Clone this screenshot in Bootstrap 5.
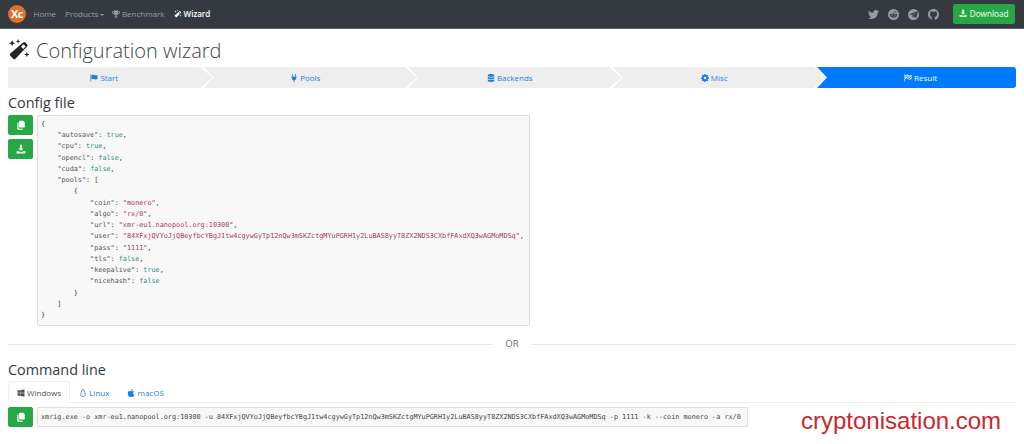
<!DOCTYPE html>
<html lang="en">
<head>
<meta charset="utf-8">
<title>Configuration wizard</title>
<link href="https://cdn.jsdelivr.net/npm/bootstrap@5.3.0/dist/css/bootstrap.min.css" rel="stylesheet">
<style>
html,body{height:444px;overflow:hidden}
body{font-family:"Open Sans","Noto Sans",sans-serif;font-size:8px;line-height:1.4;color:#212529;background:#fff;position:relative}
svg.ic{width:1em;height:1em;fill:currentColor;vertical-align:-.125em}
.topbar{height:29px;background:#343a40;padding:0 9px 0 8px;border-bottom:1px solid #5f6368}
.brandmark{width:18px;height:18px;border-radius:50%;background:#e0702a;color:#fff;font:700 11px/18px "Open Sans",sans-serif;text-align:center;letter-spacing:-.5px;margin-right:3px}
.topbar .nav-link{font-size:8px;padding:0 4.5px;color:rgba(255,255,255,.5)}
.topbar .nav-link.active{color:#fff;font-weight:600}
.topbar .dropdown-toggle{padding-right:3px}
.topbar .dropdown-toggle::after{margin-left:2px;vertical-align:.15em;border-width:.25em .25em 0}
.social{color:rgba(255,255,255,.5);font-size:11px;gap:9px;margin-right:14px}
.btn-dl{font-size:8.2px;height:20px;width:62px;padding:0;border-radius:2px;line-height:18px;background:#28a745;border-color:#28a745;color:#fff;margin-top:-1px}
.pagewrap{padding:0 8px}
.wiz-title{font-size:20px;font-weight:300;line-height:30px;margin:7px 0 0;color:#3f464c;display:flex;align-items:center;gap:6px;height:30px}
.wiz-title svg{width:22px;height:22px;fill:#212529;margin-top:-3px}
.stepper{display:flex;height:21px;margin-top:1px}
.stepitem{flex:0 0 213.5px;margin-right:-9px;background:#eee;color:#1c7fe8;text-align:center;line-height:22px;padding-right:10px;clip-path:polygon(0 0,calc(100% - 12px) 0,100% 50%,calc(100% - 12px) 100%,0 100%,10px 50%)}
.stepitem:first-child{flex-basis:204.5px;border-radius:2px 0 0 2px;padding-right:12px;clip-path:polygon(0 0,calc(100% - 12px) 0,100% 50%,calc(100% - 12px) 100%,0 100%)}
.stepitem:last-child{flex:1 1 0;margin-right:0;background:#007bff;color:#fff;border-radius:0 3px 3px 0;padding-right:0;padding-left:8px;clip-path:polygon(0 0,100% 0,100% 100%,0 100%,10px 50%)}
.sect-h{font-size:14.4px;font-weight:400;line-height:18px;margin:6px 0 3px;color:#343a40}
.act-btn{width:25px;height:20px;padding:0;background:#28a745;border-color:#28a745;color:#fff;border-radius:2px;font-size:10px;line-height:18px;display:flex;align-items:center;justify-content:center}
.codebox{font-family:"DejaVu Sans Mono","Liberation Mono",monospace;font-size:6.81px;line-height:11.24px;background:#f8f8f8;border:1px solid #ddd;color:#444;margin:0;padding:3px;overflow:hidden;border-radius:1px}
.cfgpre{width:493px;height:211px}
.k{color:#555}.b{color:#2f8f83}.s{color:#a63a5c}
.orline{display:flex;align-items:center;gap:12px;color:#6c757d;font-size:9.6px;height:16px;margin-top:10px}
.orline::before,.orline::after{content:"";flex:1;border-top:1px solid #e9e9e9}
.cmd-h{margin:9px 0 2px}
.ostabs{border-bottom:1px solid #eee;height:22px;margin-bottom:4px}
.ostabs .nav-link{font-size:8px;padding:0 8px;height:22px;line-height:22px;color:#1c7fe8;border-radius:2px 2px 0 0;border:1px solid transparent}
.ostabs .nav-link.active{color:#495057;border-color:#eee #eee #fff;background:#fff}
.cmdbox{width:711px;height:20px;line-height:18px;padding:0 3px;white-space:pre}
.watermark{position:absolute;left:801px;top:408px;color:#c9282d;font:24px/26px "Liberation Sans",Arial,sans-serif}
</style>
</head>
<body>
<svg width="0" height="0" class="position-absolute">
<defs>
<symbol id="i-copy" viewBox="0 0 16 16"><path d="M6 1h5.500L14 3.500V11a1 1 0 0 1-1 1H6a1 1 0 0 1-1-1V2a1 1 0 0 1 1-1zM3 4h1v8a2 2 0 0 0 2 2h5v.5a1 1 0 0 1-1 1H3.500a1.500 1.500 0 0 1-1.500-1.500V5a1 1 0 0 1 1-1z"/></symbol>
<symbol id="i-dl" viewBox="0 0 16 16"><path d="M6.500 1h3v6H12L8 11 4 7h2.500zM1 11.500h3.800L6.500 13h3l1.700-1.500H15V15H1zm11.500 1.300a.6.6 0 1 0 0 1.200.6.6 0 0 0 0-1.200z"/></symbol>
<symbol id="i-flag" viewBox="0 0 16 16"><path d="M1 1h1.300v14H1zM3 2.200c2.500-1.300 4.500-.8 6 0s3.500.8 6 0v8c-2.500 1.300-4.500 1-6 .2s-3.500-.9-6 0z"/></symbol>
<symbol id="i-plug" viewBox="0 0 16 16"><path d="M4.500 0H6v4.500H4.500zM10 0h1.500v4.500H10zM2.500 5h11v1.500h-1V8a4.500 4.500 0 0 1-3.500 4.400V16H7v-3.600A4.500 4.500 0 0 1 3.500 8V6.500h-1z"/></symbol>
<symbol id="i-db" viewBox="0 0 16 16"><path d="M8 0c3.600 0 6.500 1 6.500 2.300v1.400C14.500 5 11.600 6 8 6S1.500 5 1.500 3.700V2.300C1.500 1 4.400 0 8 0zM1.500 5.300C3 6.400 5.300 7 8 7s5-.6 6.500-1.700v3.400C14.500 10 11.600 11 8 11s-6.500-1-6.500-2.300zm0 5C3 11.400 5.300 12 8 12s5-.6 6.500-1.700v3.400C14.500 15 11.600 16 8 16s-6.500-1-6.500-2.300z"/></symbol>
<symbol id="i-cog" viewBox="0 0 16 16"><path fill-rule="evenodd" d="M6.700 0h2.600l.4 2.100 1.300.6 1.800-1.200 1.800 1.800-1.200 1.800.6 1.300 2 .4v2.600l-2 .4-.6 1.300 1.200 1.800-1.800 1.800-1.800-1.200-1.300.6-.4 2.100H6.700l-.4-2.100-1.300-.6-1.800 1.200-1.800-1.800 1.200-1.800-.6-1.300-2-.4V6.800l2-.4.6-1.300-1.200-1.800 1.800-1.800L5 2.700l1.300-.6zM8 5.500a2.500 2.500 0 1 0 0 5 2.500 2.500 0 0 0 0-5z"/></symbol>
<symbol id="i-check" viewBox="0 0 16 16"><path fill-rule="evenodd" d="M1 1h1.300v14H1zM3 2.200c2.500-1.300 4.500-.8 6 0s3.500.8 6 0v8c-2.500 1.300-4.500 1-6 .2s-3.500-.9-6 0zM4 3v2.500h2.500V3zm2.500 2.500V8H9V5.500zM9 3v2.500h2.500V3zm2.500 2.500V8H14V5.500zM4 8v2h2.500V8zm5 0v2h2.500V8z"/></symbol>
<symbol id="i-trophy" viewBox="0 0 16 16"><path fill-rule="evenodd" d="M4 1h8v1.500h3.500V5c0 2.200-1.800 3.800-4.400 4.200-.6.800-1.300 1.300-2.100 1.500V13h2v2H5v-2h2v-2.300c-.8-.2-1.500-.7-2.100-1.500C2.300 8.800.5 7.200.5 5V2.500H4zM2 4v1c0 1 .8 2 2.400 2.500-.3-1-.4-2.200-.4-3.500zm12 0h-2c0 1.300-.1 2.500-.4 3.500C13.200 7 14 6 14 5z"/></symbol>
<symbol id="i-magic" viewBox="0 0 24 24"><path d="M16.500 3.800a1.700 1.700 0 0 1 2.400 0l1.900 1.900a1.700 1.700 0 0 1 0 2.400L8.200 21.500a1.700 1.700 0 0 1-2.400 0l-3.300-3.300a1.700 1.700 0 0 1 0-2.400zM14.200 8.500l2.300 2.300 2.700-2.700-2.300-2.300zM4.500 1l1 2.500L8 4.500 5.500 5.500l-1 2.500-1-2.500L1 4.500l2.500-1zM11 0l.7 1.800 1.800.7-1.800.7L11 5l-.7-1.800-1.800-.7 1.800-.7zM20.500 14l.8 2.200 2.200.8-2.200.8-.8 2.200-.8-2.200-2.200-.8 2.200-.8z"/></symbol>
<symbol id="i-tw" viewBox="0 0 512 512"><path d="M459.37 151.716c.325 4.548.325 9.097.325 13.645 0 138.72-105.583 298.558-298.558 298.558-59.452 0-114.68-17.219-161.137-47.106 8.447.974 16.568 1.299 25.34 1.299 49.055 0 94.213-16.568 130.274-44.832-46.132-.975-84.792-31.188-98.112-72.772 6.498.974 12.995 1.624 19.818 1.624 9.421 0 18.843-1.3 27.614-3.573-48.081-9.747-84.143-51.98-84.143-102.985v-1.299c13.969 7.797 30.214 12.67 47.431 13.319-28.264-18.843-46.781-51.005-46.781-87.391 0-19.492 5.197-37.36 14.294-52.954 51.655 63.675 129.3 105.258 216.365 109.807-1.624-7.797-2.599-15.918-2.599-24.04 0-57.828 46.782-104.934 104.934-104.934 30.213 0 57.502 12.67 76.67 33.137 23.715-4.548 46.456-13.32 66.599-25.34-7.798 24.366-24.366 44.833-46.132 57.827 21.117-2.273 41.584-8.122 60.426-16.243-14.292 20.791-32.161 39.308-52.628 54.253z"/></symbol>
<symbol id="i-rd" viewBox="0 0 16 16"><path fill-rule="evenodd" d="M8 0a8 8 0 1 1 0 16A8 8 0 0 1 8 0zM3.500 7a1.100 1.100 0 0 0-.5 2c0 2 2.200 3.500 5 3.500s5-1.500 5-3.500a1.100 1.100 0 1 0-1.500-1.500C10.700 7 9.500 6.600 8.300 6.500L9 4.300l1.700.4a.9.900 0 1 0 .1-.7L8.700 3.500 7.700 6.500c-1.200.1-2.400.5-3.200 1A1.100 1.100 0 0 0 3.500 7zM6 7.800a1 1 0 1 1 0 2 1 1 0 0 1 0-2zm4 0a1 1 0 1 1 0 2 1 1 0 0 1 0-2zM5.800 10.500c1.400 1 3 1 4.400 0l.2.300c-1.400 1.200-3.400 1.200-4.800 0z"/></symbol>
<symbol id="i-tg" viewBox="0 0 16 16"><path fill-rule="evenodd" d="M8 0a8 8 0 1 1 0 16A8 8 0 0 1 8 0zM3 7.800l2.700 1 1 3.200c.1.300.4.300.6.100l1.500-1.200 2.700 2c.3.200.6 0 .7-.3l1.800-8.600c.1-.4-.3-.7-.6-.6L3 7.200c-.4.100-.4.500 0 .6zm3.500.9l5-3.100c.1-.1.200 0 .1.100L7.500 9.500l-.3 1.700z"/></symbol>
<symbol id="i-gh" viewBox="0 0 16 16"><path d="M8 0C3.580 0 0 3.580 0 8c0 3.540 2.290 6.530 5.470 7.590.4.070.550-.170.550-.380 0-.190-.010-.820-.010-1.490-2.010.370-2.530-.490-2.690-.940-.090-.230-.480-.940-.820-1.130-.280-.150-.680-.520-.010-.530.630-.010 1.080.580 1.230.820.720 1.210 1.870.870 2.330.660.070-.520.280-.870.510-1.070-1.780-.200-3.640-.890-3.640-3.950 0-.870.310-1.590.820-2.150-.080-.200-.360-1.020.080-2.120 0 0 .670-.210 2.200.820.640-.180 1.320-.270 2-.270.680 0 1.360.090 2 .270 1.530-1.040 2.200-.820 2.200-.820.440 1.100.160 1.920.080 2.120.510.560.820 1.270.820 2.150 0 3.070-1.870 3.750-3.650 3.950.290.250.540.730.540 1.480 0 1.070-.010 1.930-.010 2.200 0 .210.150.460.550.380A8.013 8.013 0 0016 8c0-4.420-3.580-8-8-8z"/></symbol>
<symbol id="i-win" viewBox="0 0 448 512"><path d="M0 93.7l183.6-25.3v177.4H0V93.7zm0 324.6l183.6 25.3V268.4H0v149.900zm203.800 28L448 480V268.400H203.800v177.900zm0-380.600v180.100H448V32L203.800 65.700z"/></symbol>
<symbol id="i-linux" viewBox="0 0 16 16"><path fill="none" stroke="currentColor" stroke-width="1.500" d="M8 1c-1.700 0-2.300 1.300-2.300 3 0 1.800-2.700 4-2.700 7 0 2.400 2 4 5 4s5-1.600 5-4c0-3-2.700-5.200-2.700-7C10.300 2.300 9.700 1 8 1z"/></symbol>
<symbol id="i-apple" viewBox="0 0 16 16"><path d="M11.182.008C11.148-.03 9.923.023 8.857 1.180c-1.066 1.156-.902 2.482-.878 2.516.024.034 1.520.087 2.475-1.258.955-1.345.762-2.391.728-2.430Zm3.314 11.733c-.048-.096-2.325-1.234-2.113-3.422.212-2.189 1.675-2.789 1.698-2.854.023-.065-.597-.790-1.254-1.157a3.692 3.692 0 0 0-1.563-.434c-.108-.003-.483-.095-1.254.116-.508.139-1.653.589-1.968.607-.316.018-1.256-.522-2.267-.665-.647-.100-1.333.105-1.824.302-.490.197-1.422.759-2.074 2.242-.652 1.482-.311 3.830-.067 4.560.244.729.625 1.924 1.273 2.796.576.984 1.340 1.667 1.659 1.899.319.232 1.219.386 1.843.067.502-.308 1.408-.485 1.766-.472.357.013 1.061.154 1.782.539.571.197 1.111.115 1.652-.105.541-.221 1.324-1.059 2.238-2.758.347-.790.505-1.217.473-1.282Z"/></symbol>
</defs>
</svg>

<nav class="topbar d-flex align-items-center">
  <div class="brandmark">Xc</div>
  <ul class="nav align-items-center">
    <li class="nav-item"><a class="nav-link" href="#">Home</a></li>
    <li class="nav-item"><a class="nav-link dropdown-toggle" href="#">Products</a></li>
    <li class="nav-item"><a class="nav-link" href="#"><svg class="ic"><use href="#i-trophy"/></svg> Benchmark</a></li>
    <li class="nav-item"><a class="nav-link active" href="#"><svg class="ic"><use href="#i-magic"/></svg> Wizard</a></li>
  </ul>
  <div class="d-flex align-items-center social ms-auto">
    <svg class="ic"><use href="#i-tw"/></svg>
    <svg class="ic"><use href="#i-rd"/></svg>
    <svg class="ic"><use href="#i-tg"/></svg>
    <svg class="ic"><use href="#i-gh"/></svg>
  </div>
  <a class="btn btn-dl" href="#"><svg class="ic"><use href="#i-dl"/></svg> Download</a>
</nav>

<main class="pagewrap">
  <h1 class="wiz-title"><svg><use href="#i-magic"/></svg>Configuration wizard</h1>
  <div class="stepper">
    <div class="stepitem"><svg class="ic"><use href="#i-flag"/></svg> Start</div>
    <div class="stepitem"><svg class="ic"><use href="#i-plug"/></svg> Pools</div>
    <div class="stepitem"><svg class="ic"><use href="#i-db"/></svg> Backends</div>
    <div class="stepitem"><svg class="ic"><use href="#i-cog"/></svg> Misc</div>
    <div class="stepitem"><svg class="ic"><use href="#i-check"/></svg> Result</div>
  </div>

  <h4 class="sect-h">Config file</h4>
  <div class="d-flex gap-1">
    <div class="d-flex flex-column gap-1">
      <button class="btn act-btn"><svg class="ic"><use href="#i-copy"/></svg></button>
      <button class="btn act-btn"><svg class="ic"><use href="#i-dl"/></svg></button>
    </div>
<pre class="codebox cfgpre">{
    <span class="k">"autosave"</span>: <span class="b">true</span>,
    <span class="k">"cpu"</span>: <span class="b">true</span>,
    <span class="k">"opencl"</span>: <span class="b">false</span>,
    <span class="k">"cuda"</span>: <span class="b">false</span>,
    <span class="k">"pools"</span>: [
        {
            <span class="k">"coin"</span>: <span class="s">"monero"</span>,
            <span class="k">"algo"</span>: <span class="s">"rx/0"</span>,
            <span class="k">"url"</span>: <span class="s">"xmr-eu1.nanopool.org:10300"</span>,
            <span class="k">"user"</span>: <span class="s">"84XFxjQVYoJjQBeyfbcYBgJ1tw4cgywGyTp12nQw3mSKZctgMYuPGRH1y2LuBAS8yyT8ZX2NDS3CXbfFAxdXQ3wAGMoMDSq"</span>,
            <span class="k">"pass"</span>: <span class="s">"1111"</span>,
            <span class="k">"tls"</span>: <span class="b">false</span>,
            <span class="k">"keepalive"</span>: <span class="b">true</span>,
            <span class="k">"nicehash"</span>: <span class="b">false</span>
        }
    ]
}</pre>
  </div>

  <div class="orline">OR</div>

  <h4 class="sect-h cmd-h">Command line</h4>
  <ul class="nav ostabs">
    <li class="nav-item"><a class="nav-link active" href="#"><svg class="ic"><use href="#i-win"/></svg> Windows</a></li>
    <li class="nav-item"><a class="nav-link" href="#"><svg class="ic"><use href="#i-linux"/></svg> Linux</a></li>
    <li class="nav-item"><a class="nav-link" href="#"><svg class="ic"><use href="#i-apple"/></svg> macOS</a></li>
  </ul>
  <div class="d-flex gap-1">
    <button class="btn act-btn"><svg class="ic"><use href="#i-copy"/></svg></button>
    <div class="codebox cmdbox">xmrig.exe -o xmr-eu1.nanopool.org:10300 -u 84XFxjQVYoJjQBeyfbcYBgJ1tw4cgywGyTp12nQw3mSKZctgMYuPGRH1y2LuBAS8yyT8ZX2NDS3CXbfFAxdXQ3wAGMoMDSq -p 1111 -k --coin monero -a rx/0</div>
  </div>
</main>
<div class="watermark">cryptonisation.com</div>
<script src="https://cdn.jsdelivr.net/npm/bootstrap@5.3.0/dist/js/bootstrap.bundle.min.js"></script>
</body>
</html>
